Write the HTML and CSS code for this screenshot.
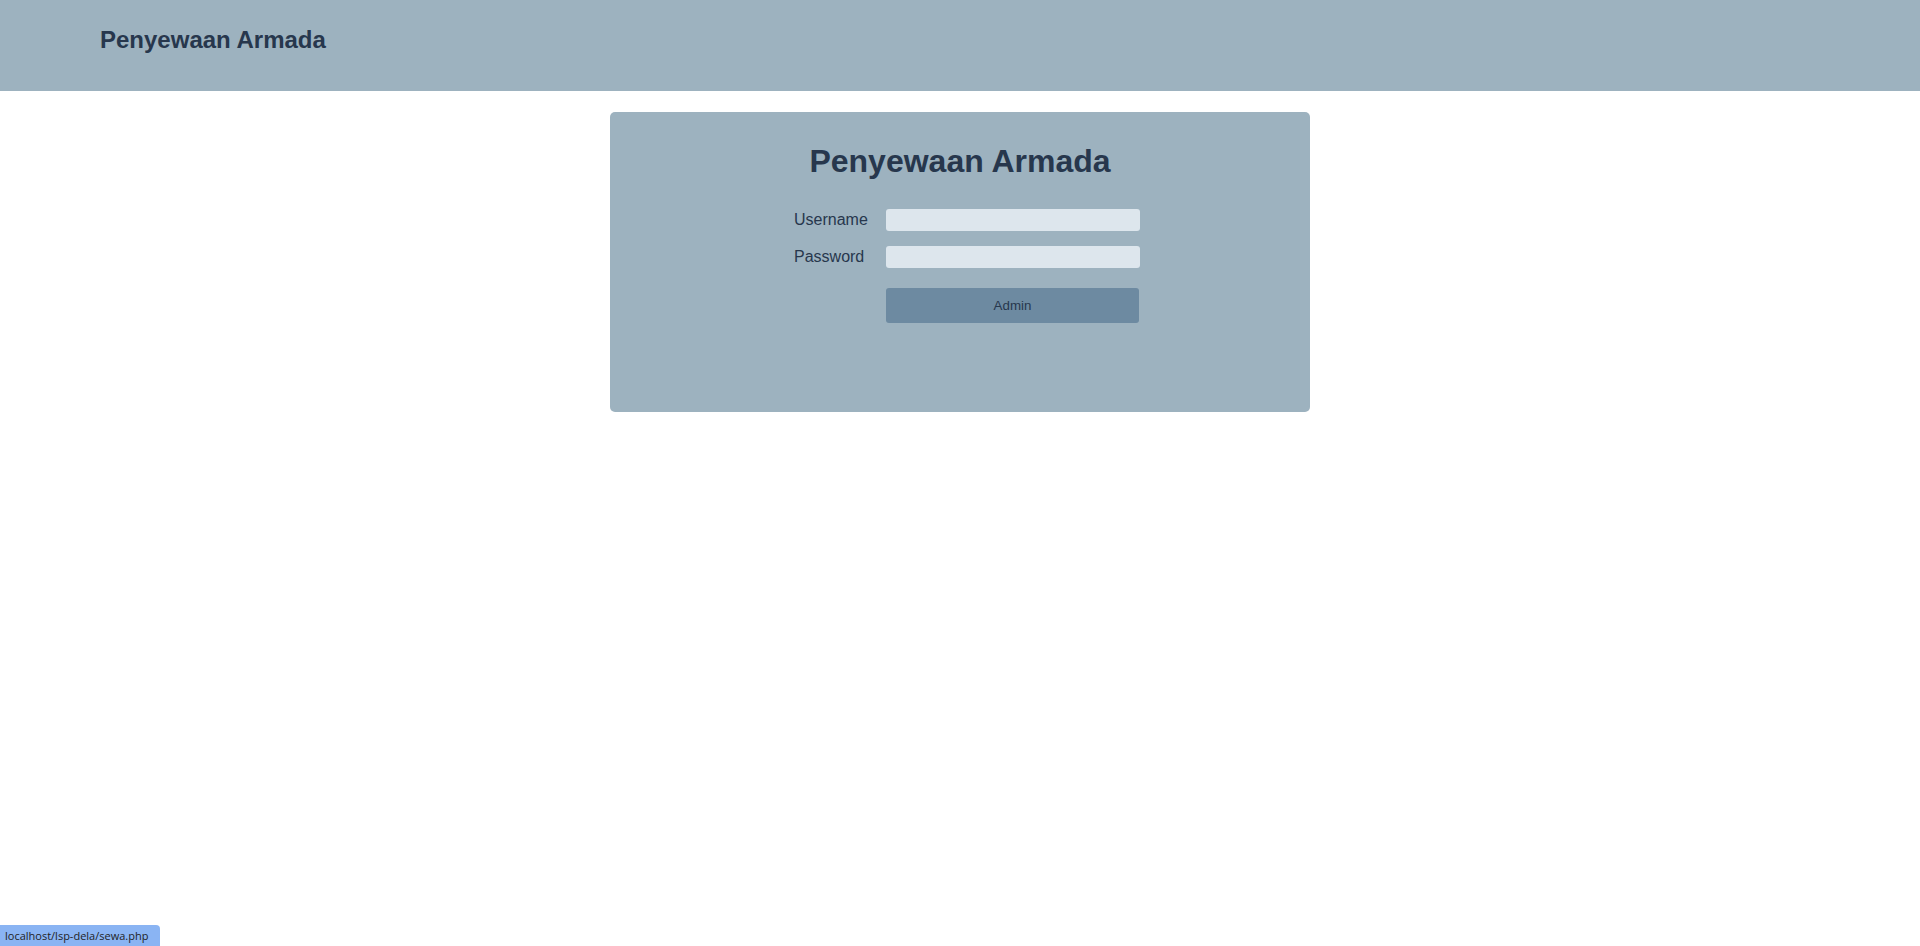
FILE: index.html
```html
<!DOCTYPE html>
<html lang="id">
<head>
<meta charset="utf-8">
<title>Penyewaan Armada</title>
<link rel="stylesheet" href="styles.css">
</head>
<body>
<header class="topbar">
  <h2 class="brand">Penyewaan Armada</h2>
</header>
<main class="card">
  <h1 class="card-title">Penyewaan Armada</h1>
  <form class="login-form">
    <label class="field-label" for="username">Username</label>
    <input class="field-input" id="username" type="text">
    <label class="field-label" for="password">Password</label>
    <input class="field-input" id="password" type="password">
    <span class="spacer"></span>
    <button class="submit-btn" type="button">Admin</button>
  </form>
</main>
<div class="status-bar">localhost/lsp-dela/sewa.php</div>
</body>
</html>
```
FILE: styles.css
```css
* { box-sizing: border-box; }
html, body { margin: 0; padding: 0; }
body {
  background: #ffffff;
  font-family: "Liberation Sans", Arial, sans-serif;
  color: #27374d;
}
.topbar {
  height: 91px;
  background: #9db2bf;
  padding: 26px 100px 0;
}
.brand {
  margin: 0;
  font-size: 24px;
  font-weight: bold;
  line-height: normal;
  color: #27374d;
}
.card {
  width: 700px;
  height: 300px;
  margin: 21px auto 0;
  background: #9db2bf;
  border-radius: 5px;
  padding-top: 31px;
}
.card-title {
  margin: 0;
  text-align: center;
  font-size: 32px;
  font-weight: bold;
  line-height: normal;
  color: #27374d;
}
.login-form {
  display: grid;
  grid-template-columns: 92px 254px;
  row-gap: 15px;
  align-items: center;
  margin: 29px 0 0 184px;
}
.field-label {
  font-size: 16px;
  line-height: normal;
  color: #27374d;
}
.field-input {
  width: 254px;
  height: 22px;
  border: none;
  border-radius: 3px;
  background: #dde6ed;
  padding: 0 4px;
  font-family: inherit;
  font-size: 13.33px;
  outline: none;
}
.submit-btn {
  grid-column: 2;
  width: 253px;
  height: 35px;
  margin-top: 5px;
  border: none;
  border-radius: 3px;
  background: #6d8aa1;
  color: #27374d;
  font-family: "Liberation Sans", Arial, sans-serif;
  font-size: 13.33px;
  cursor: pointer;
}
.spacer { display: block; }
.status-bar {
  position: fixed;
  left: 0;
  bottom: 0;
  width: 160px;
  height: 21px;
  padding: 0 0 0 5px;
  background: #8ab4f3;
  border-top-right-radius: 4px;
  font-family: "Open Sans", "Noto Sans", sans-serif;
  font-size: 11px;
  line-height: 21px;
  color: #1f1f1f;
  white-space: nowrap;
  overflow: hidden;
}
```
